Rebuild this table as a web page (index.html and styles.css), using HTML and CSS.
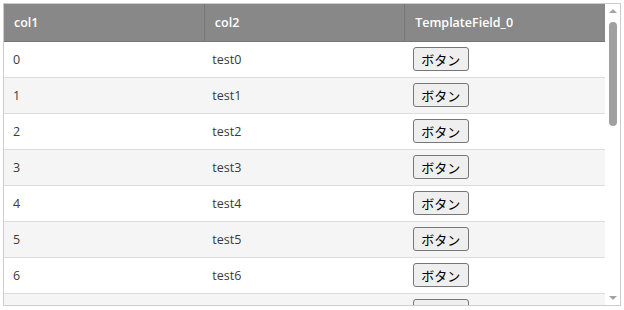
FILE: index.html
```html
<html>
<head>
<title>GridView</title>
<link rel="stylesheet" href="styles.css">
<meta http-equiv="Content-Type" content="text/html; charset=UTF-8" >
</head>
<body>
<div class="grid-frame">
  <div class="grid-view">
    <table class="grid-table" cellspacing="0" cellpadding="0">
      <tr class="grid-header">
        <th>col1</th>
        <th>col2</th>
        <th>TemplateField_0</th>
      </tr>
      <tr><td>0</td><td>test0</td><td><button class="grid-button">ボタン</button></td></tr>
      <tr class="alt"><td>1</td><td>test1</td><td><button class="grid-button">ボタン</button></td></tr>
      <tr><td>2</td><td>test2</td><td><button class="grid-button">ボタン</button></td></tr>
      <tr class="alt"><td>3</td><td>test3</td><td><button class="grid-button">ボタン</button></td></tr>
      <tr><td>4</td><td>test4</td><td><button class="grid-button">ボタン</button></td></tr>
      <tr class="alt"><td>5</td><td>test5</td><td><button class="grid-button">ボタン</button></td></tr>
      <tr><td>6</td><td>test6</td><td><button class="grid-button">ボタン</button></td></tr>
      <tr class="alt"><td></td><td></td><td><button class="grid-button"></button></td></tr>
    </table>
  </div>
  <div class="scroll-bar">
    <div class="scroll-up"></div>
    <div class="scroll-track"><div class="scroll-thumb"></div></div>
    <div class="scroll-down"></div>
  </div>
</div>
</body>
</html>
```

FILE: styles.css
```css
body {
 margin: 3px 0 0 3px;
 background-color: #ffffff;
 font-family: "Open Sans", "Noto Sans CJK JP", sans-serif;
 font-size: 12.5px;
 color: #3a3a3a;
}
table, td, tr, th {
 font-family: "Open Sans", "Noto Sans CJK JP", sans-serif;
 font-size: 12.5px;
 color: #3a3a3a;
}
.grid-frame {
 display: flex;
 width: 616px;
 height: 301px;
 border: 1px solid #cccccc;
 overflow: hidden;
}
.grid-view {
 width: 601px;
 overflow: hidden;
}
.grid-table {
 width: 601px;
 border-collapse: collapse;
 table-layout: fixed;
}
.grid-table th {
 height: 37px;
 padding: 0 0 0 10px;
 text-align: left;
 font-weight: 600;
 color: #ffffff;
 background-color: #888888;
 border-left: 1px solid #777777;
 border-bottom: 1px solid #777777;
}
.grid-table th:first-child {
 border-left: none;
}
.grid-table td {
 height: 36px;
 padding: 0 0 0 9px;
 border-bottom: 1px solid #dddddd;
 background-color: #ffffff;
}
.grid-table tr.alt td {
 background-color: #f5f5f5;
}
.grid-table td:nth-child(2), .grid-table td:nth-child(3) {
 padding-left: 8px;
}
.grid-button {
 font-family: "Noto Sans CJK JP", sans-serif;
 font-size: 13px;
 color: #000000;
 width: 56px;
 height: 24px;
 padding: 0;
 vertical-align: middle;
 background-color: #efefef;
 border: 1px solid #767676;
 border-radius: 3px;
}
.scroll-bar {
 width: 15px;
 display: flex;
 flex-direction: column;
 align-items: center;
 background-color: #ffffff;
}
.scroll-up, .scroll-down {
 width: 0;
 height: 0;
 margin: 5px 0;
 border-left: 4px solid transparent;
 border-right: 4px solid transparent;
}
.scroll-up {
 border-bottom: 4px solid #a3a3a3;
}
.scroll-down {
 border-top: 4px solid #a3a3a3;
}
.scroll-track {
 flex: 1;
 width: 15px;
 display: flex;
 justify-content: center;
 padding-top: 4px;
}
.scroll-thumb {
 width: 8px;
 height: 104px;
 border-radius: 4px;
 background-color: #a0a0a0;
}
```
